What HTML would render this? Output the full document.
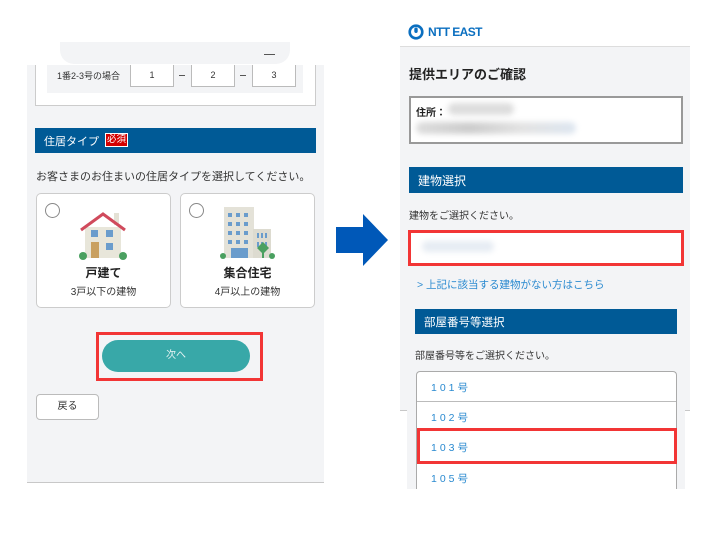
<!DOCTYPE html>
<html><head><meta charset="utf-8">
<style>
*{margin:0;padding:0;box-sizing:border-box}
body{width:710px;height:533px;background:#fff;position:relative;overflow:hidden;font-family:"Liberation Sans","Noto Sans CJK JP",sans-serif;color:#333}
.a{position:absolute}
.t{font-size:11px;white-space:nowrap}
</style></head><body>
<!-- LEFT -->
<div class="a" style="left:60px;top:42px;width:230px;height:22px;background:#f3f4f6;border-radius:0 0 14px 14px"></div>
<div class="a" style="left:264px;top:54px;width:11px;height:1px;background:#555"></div>
<div class="a" style="left:27px;top:65px;width:297px;height:418px;background:#f3f4f6;border-bottom:1px solid #c8c8c8"></div>
<div class="a" style="left:35px;top:65px;width:281px;height:41px;background:#fff;border:1px solid #ccc;border-top:none"></div>
<div class="a" style="left:47px;top:65px;width:256px;height:28px;background:#f3f4f6"></div>
<div class="a t" style="left:57px;top:69px;font-size:9px">1番2-3号の場合</div>
<div class="a" style="left:130px;top:65px;width:44px;height:22px;background:#fff;border:1px solid #bbb;border-top:none;font-size:9px;text-align:center;line-height:20px">1</div>
<div class="a" style="left:191px;top:65px;width:44px;height:22px;background:#fff;border:1px solid #bbb;border-top:none;font-size:9px;text-align:center;line-height:20px">2</div>
<div class="a" style="left:252px;top:65px;width:44px;height:22px;background:#fff;border:1px solid #bbb;border-top:none;font-size:9px;text-align:center;line-height:20px">3</div>
<div class="a" style="left:179px;top:75px;width:6px;height:1px;background:#555"></div>
<div class="a" style="left:240px;top:75px;width:6px;height:1px;background:#555"></div>
<div class="a" style="left:35px;top:128px;width:281px;height:25px;background:#005a96"></div>
<div class="a t" style="left:44px;top:133px;color:#fff;font-size:11px">住居タイプ</div>
<div class="a" style="left:105px;top:133px;width:23px;height:14px;background:#d40000;border:1px solid #fff;color:#fff;font-size:9.5px;text-align:center;line-height:12px">必須</div>
<div class="a t" style="left:36px;top:168px;font-size:11px">お客さまのお住まいの住居タイプを選択してください。</div>
<div class="a" style="left:36px;top:193px;width:135px;height:115px;background:#fff;border:1px solid #ccc;border-radius:5px"></div>
<div class="a" style="left:180px;top:193px;width:135px;height:115px;background:#fff;border:1px solid #ccc;border-radius:5px"></div>
<div class="a" style="left:45px;top:203px;width:15px;height:15px;border:1.5px solid #888;border-radius:50%;background:#fff"></div>
<div class="a" style="left:189px;top:203px;width:15px;height:15px;border:1.5px solid #888;border-radius:50%;background:#fff"></div>
<svg class="a" style="left:78px;top:210px" width="50" height="50" viewBox="0 0 50 50">
<rect x="36" y="3" width="5" height="12" fill="#e4e1d5"/>
<rect x="7" y="17" width="36" height="31" fill="#e8e6da"/>
<polyline points="3,20 25,4 47,20" fill="none" stroke="#d04a5c" stroke-width="3"/>
<rect x="13" y="20" width="7" height="7" fill="#6a9ccc"/><rect x="28" y="20" width="7" height="7" fill="#6a9ccc"/>
<rect x="28" y="33" width="7" height="7" fill="#6a9ccc"/>
<rect x="13" y="32" width="8" height="16" fill="#c9a060"/>
<circle cx="5" cy="46" r="4" fill="#4aa060"/><circle cx="45" cy="46" r="4" fill="#4aa060"/>
</svg>
<svg class="a" style="left:220px;top:205px" width="56" height="55" viewBox="0 0 56 55">
<rect x="4" y="2" width="30" height="51" fill="#e4e2d8"/>
<rect x="33" y="24" width="18" height="29" fill="#dddbd0"/>
<g fill="#6a9ccc">
<rect x="8" y="8" width="4" height="4"/><rect x="16" y="8" width="4" height="4"/><rect x="24" y="8" width="4" height="4"/>
<rect x="8" y="17" width="4" height="4"/><rect x="16" y="17" width="4" height="4"/><rect x="24" y="17" width="4" height="4"/>
<rect x="8" y="26" width="4" height="4"/><rect x="16" y="26" width="4" height="4"/><rect x="24" y="26" width="4" height="4"/>
<rect x="8" y="35" width="4" height="4"/><rect x="16" y="35" width="4" height="4"/><rect x="24" y="35" width="4" height="4"/>
<rect x="11" y="43" width="17" height="10"/>
<rect x="37" y="28" width="2" height="5"/><rect x="41" y="28" width="2" height="5"/><rect x="45" y="28" width="2" height="5"/>
<rect x="37" y="37" width="2" height="5"/><rect x="41" y="37" width="2" height="5"/><rect x="45" y="37" width="2" height="5"/>
</g>
<circle cx="3" cy="51" r="3" fill="#4aa060"/><circle cx="52" cy="51" r="3" fill="#4aa060"/>
<polygon points="43,37 49,43 43,49 37,43" fill="#4aa060"/><rect x="42" y="47" width="2" height="6" fill="#4aa060"/>
</svg>
<div class="a t" style="left:36px;top:264px;width:135px;text-align:center;font-weight:bold;font-size:12px;color:#222">戸建て</div>
<div class="a t" style="left:36px;top:283px;width:135px;text-align:center;font-size:10px">3戸以下の建物</div>
<div class="a t" style="left:180px;top:264px;width:135px;text-align:center;font-weight:bold;font-size:12px;color:#222">集合住宅</div>
<div class="a t" style="left:180px;top:283px;width:135px;text-align:center;font-size:10px">4戸以上の建物</div>
<div class="a" style="left:96px;top:332px;width:167px;height:49px;border:3px solid #f23535"></div>
<div class="a" style="left:102px;top:340px;width:148px;height:32px;background:#38a8a8;border-radius:16px;color:#e8f4f4;font-size:10px;text-align:center;line-height:32px">次へ</div>
<div class="a" style="left:36px;top:394px;width:63px;height:26px;background:#fff;border:1px solid #bbb;border-radius:4px;font-size:10px;text-align:center;line-height:24px">戻る</div>
<!-- ARROW -->
<svg class="a" style="left:330px;top:210px" width="65" height="60" viewBox="330 210 65 60">
<polygon points="336,227 363,227 363,214 388,240 363,266 363,253 336,253" fill="#0058b8"/>
</svg>
<!-- RIGHT -->
<svg class="a" style="left:408px;top:24px" width="16" height="16" viewBox="0 0 16 16">
<circle cx="8" cy="8" r="6.3" fill="none" stroke="#0b6fc0" stroke-width="2.6"/>
<rect x="6.3" y="3.5" width="3.4" height="5.5" rx="1.7" fill="#0b6fc0"/>
</svg>
<div class="a t" style="left:428px;top:25px;color:#0b6fc0;font-weight:bold;font-size:12px;letter-spacing:-0.6px">NTT EAST</div>
<div class="a" style="left:400px;top:46px;width:290px;height:365px;background:#f3f4f6;border-top:1px solid #ddd;border-bottom:1px solid #c8c8c8"></div>
<div class="a" style="left:407px;top:410px;width:278px;height:79px;background:#f3f4f6"></div>
<div class="a t" style="left:409px;top:64px;font-weight:bold;font-size:13px;color:#222">提供エリアのご確認</div>
<div class="a" style="left:409px;top:96px;width:274px;height:48px;background:#fff;border:2px solid #999"></div>
<div class="a t" style="left:416px;top:104px;font-size:10px;font-weight:bold;color:#222">住所：</div>
<div class="a" style="left:448px;top:103px;width:66px;height:12px;background:#ddd;border-radius:6px;filter:blur(3px)"></div>
<div class="a" style="left:416px;top:122px;width:160px;height:12px;background:linear-gradient(90deg,#ddd,#ccc,#e3e3e3,#dde6f0);border-radius:6px;filter:blur(3px)"></div>
<div class="a" style="left:409px;top:167px;width:274px;height:26px;background:#005a96"></div>
<div class="a t" style="left:418px;top:172px;color:#fff;font-size:12px">建物選択</div>
<div class="a t" style="left:409px;top:207px;font-size:10px">建物をご選択ください。</div>
<div class="a" style="left:408px;top:230px;width:276px;height:36px;background:#fff;border:3px solid #f23535"></div>
<div class="a" style="left:422px;top:241px;width:72px;height:11px;background:#e6ecf3;border-radius:6px;filter:blur(3px)"></div>
<div class="a t" style="left:417px;top:277px;color:#2a8ad0;font-size:10.5px">&gt; 上記に該当する建物がない方はこちら</div>
<div class="a" style="left:415px;top:309px;width:262px;height:25px;background:#005a96"></div>
<div class="a t" style="left:424px;top:314px;color:#fff;font-size:11.5px">部屋番号等選択</div>
<div class="a t" style="left:415px;top:347px;font-size:10px">部屋番号等をご選択ください。</div>
<div class="a" style="left:416px;top:371px;width:261px;height:120px;background:#fff;border:1px solid #aaa;border-bottom:none;border-radius:4px 4px 0 0"></div>
<div class="a" style="left:417px;top:401px;width:259px;height:1px;background:#bbb"></div>
<div class="a t" style="left:431px;top:380px;color:#2a8ad0;font-size:10.5px"><span style="letter-spacing:3px">101</span>号</div>
<div class="a t" style="left:431px;top:410px;color:#2a8ad0;font-size:10.5px"><span style="letter-spacing:3px">102</span>号</div>
<div class="a" style="left:417px;top:428px;width:260px;height:36px;border:3px solid #f23535"></div>
<div class="a t" style="left:431px;top:440px;color:#2a8ad0;font-size:10.5px"><span style="letter-spacing:3px">103</span>号</div>
<div class="a t" style="left:431px;top:471px;color:#2a8ad0;font-size:10.5px"><span style="letter-spacing:3px">105</span>号</div>
<div class="a" style="left:400px;top:489px;width:300px;height:44px;background:#fff"></div>
</body></html>
